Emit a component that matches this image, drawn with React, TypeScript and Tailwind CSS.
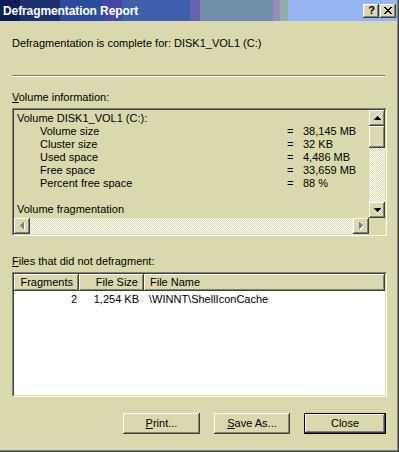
import React from "react";

const btnBevel =
  "shadow-[inset_-1px_-1px_#404040,inset_1px_1px_#ffffff,inset_-2px_-2px_#808080,inset_2px_2px_#dad8ad]";

function Px({ rows, color }: { rows: [number, number, number][]; color: string }) {
  return (
    <>
      {rows.map(([x, y, w], i) => (
        <rect key={i} x={x} y={y} width={w} height={1} fill={color} />
      ))}
    </>
  );
}

function UpArrow() {
  return (
    <svg width="7" height="4" shapeRendering="crispEdges">
      <Px color="#000" rows={[[3, 0, 1], [2, 1, 3], [1, 2, 5], [0, 3, 7]]} />
    </svg>
  );
}
function DownArrow() {
  return (
    <svg width="7" height="4" shapeRendering="crispEdges">
      <Px color="#000" rows={[[0, 0, 7], [1, 1, 5], [2, 2, 3], [3, 3, 1]]} />
    </svg>
  );
}
function SideArrow({ dir }: { dir: "left" | "right" }) {
  const cols = dir === "left" ? [[3, 0, 7], [2, 1, 5], [1, 2, 3], [0, 3, 1]] : [[0, 0, 7], [1, 1, 5], [2, 2, 3], [3, 3, 1]];
  return (
    <svg width="5" height="8" shapeRendering="crispEdges">
      {cols.map(([x, y, h], i) => (
        <rect key={"s" + i} x={x + 1} y={y + 1} width={1} height={h} fill="#ffffff" />
      ))}
      {cols.map(([x, y, h], i) => (
        <rect key={"g" + i} x={x} y={y} width={1} height={h} fill="#808080" />
      ))}
    </svg>
  );
}
function CloseGlyph() {
  const rows: [number, number, number][] = [
    [0, 0, 2], [6, 0, 2],
    [1, 1, 2], [5, 1, 2],
    [2, 2, 4],
    [3, 3, 2],
    [2, 4, 4],
    [1, 5, 2], [5, 5, 2],
    [0, 6, 2], [6, 6, 2],
  ];
  return (
    <svg width="8" height="7" shapeRendering="crispEdges">
      <Px color="#000" rows={rows} />
    </svg>
  );
}

function Sunken({ className, children, inner }: { className: string; children: React.ReactNode; inner: string }) {
  return (
    <div className={`border border-t-[#808080] border-l-[#808080] border-b-white border-r-white ${className}`}>
      <div className={`w-full h-full border border-t-[#404040] border-l-[#404040] border-b-[#dad8ad] border-r-[#dad8ad] ${inner}`}>
        {children}
      </div>
    </div>
  );
}

const checker =
  "bg-[image:repeating-conic-gradient(#ffffff_0%_25%,#dad8ad_0%_50%)] bg-[length:2px_2px]";

const rows: [string, string][] = [
  ["Volume size", "38,145 MB"],
  ["Cluster size", "32 KB"],
  ["Used space", "4,486 MB"],
  ["Free space", "33,659 MB"],
  ["Percent free space", "88 %"],
];

export default function App() {
  return (
    <div className="w-[399px] h-[452px] bg-[#404040] pr-px pb-px font-['Liberation_Sans',Arial,sans-serif] text-[11px] text-black">
      <div className="w-full h-full bg-[#808080] pr-px pb-px">
        <div className="w-full h-full bg-[#dad8ad] flex flex-col">
          {/* Title bar */}
          <div className="h-[21px] w-full flex items-center pl-[3px] pr-[1px] bg-[linear-gradient(90deg,#0f1e55_0px,#0f1e55_20px,#1d3170_20px,#1d3170_60px,#2b4c9c_60px,#2b4c9c_103px,#4646a6_103px,#4646a6_122px,#3f5fae_122px,#3f5fae_190px,#6a62b0_190px,#6a62b0_200px,#6f8fa8_200px,#6f8fa8_273px,#9a8cb6_273px,#9a8cb6_280px,#8eb0a8_280px,#8eb0a8_288px,#94b4f4_288px,#94b4f4_100%)]">
            <span className="text-white font-bold text-[12px] leading-[14px] tracking-[-0.1px]">Defragmentation Report</span>
            <div className="ml-auto flex gap-[1px]">
              <div className={`w-[16px] h-[14px] bg-[#dad8ad] ${btnBevel} flex items-center justify-center`}>
                <span className="font-bold text-[11px] leading-[11px] pl-[1px]">?</span>
              </div>
              <div className={`w-[16px] h-[14px] bg-[#dad8ad] ${btnBevel} flex items-center justify-center`}>
                <CloseGlyph />
              </div>
            </div>
          </div>

          <div className="px-[12px] flex flex-col">
            <div className="mt-[16px] leading-[13px] h-[13px]">Defragmentation is complete for: DISK1_VOL1 (C:)</div>
            <div className="mt-[25px] w-[373px] h-[2px] border-t border-t-[#808080] border-b border-b-white" />
            <div className="mt-[14px] leading-[13px] h-[13px]">
              <span className="underline">V</span>olume information:
            </div>

            {/* Volume box */}
            <Sunken className="mt-[4px] w-[375px] h-[128px]" inner="flex flex-col">
              <div className="flex flex-1 min-h-0">
                <div className="flex-1 pl-[3px] pt-[2px] leading-[13px] overflow-hidden">
                  <div>Volume DISK1_VOL1 (C:):</div>
                  {rows.map(([k, v]) => (
                    <div key={k} className="flex">
                      <span className="pl-[23px] w-[270px]">{k}</span>
                      <span className="w-[16px]">=</span>
                      <span>{v}</span>
                    </div>
                  ))}
                  <div className="h-[13px]" />
                  <div>Volume fragmentation</div>
                </div>
                <div className={`w-[16px] flex flex-col ${checker}`}>
                  <div className={`h-[16px] bg-[#dad8ad] ${btnBevel} flex items-center justify-center`}>
                    <UpArrow />
                  </div>
                  <div className={`h-[22px] bg-[#dad8ad] ${btnBevel}`} />
                  <div className="flex-1" />
                  <div className={`h-[16px] bg-[#dad8ad] ${btnBevel} flex items-center justify-center`}>
                    <DownArrow />
                  </div>
                </div>
              </div>
              <div className="flex h-[16px]">
                <div className={`flex-1 flex ${checker}`}>
                  <div className={`w-[16px] h-[16px] bg-[#dad8ad] ${btnBevel} flex items-center justify-center`}>
                    <SideArrow dir="left" />
                  </div>
                  <div className="flex-1" />
                  <div className={`w-[16px] h-[16px] bg-[#dad8ad] ${btnBevel} flex items-center justify-center`}>
                    <SideArrow dir="right" />
                  </div>
                </div>
                <div className="w-[16px] bg-[#dad8ad]" />
              </div>
            </Sunken>

            <div className="mt-[19px] leading-[13px] h-[13px]">
              <span className="underline">F</span>iles that did not defragment:
            </div>

            {/* List view */}
            <Sunken className="mt-[4px] w-[375px] h-[125px]" inner="bg-white flex flex-col">
              <div className="flex h-[17px] leading-[17px]">
                <div className={`w-[65px] bg-[#dad8ad] ${btnBevel} text-right pr-[6px]`}>Fragments</div>
                <div className={`w-[65px] bg-[#dad8ad] ${btnBevel} text-right pr-[6px]`}>File Size</div>
                <div className={`flex-1 bg-[#dad8ad] ${btnBevel} pl-[6px]`}>File Name</div>
              </div>
              <div className="flex h-[16px] leading-[16px]">
                <div className="w-[65px] text-right pr-[2px]">2</div>
                <div className="w-[65px] text-right pr-[5px]">1,254 KB</div>
                <div className="flex-1 pl-[5px]">\WINNT\ShellIconCache</div>
              </div>
            </Sunken>

            {/* Buttons */}
            <div className="mt-[16px] w-[375px] flex justify-end gap-[14px] pr-[1px]">
              <div className={`w-[77px] h-[21px] bg-[#dad8ad] ${btnBevel} flex items-center justify-center`}>
                <span>
                  <span className="underline">P</span>rint...
                </span>
              </div>
              <div className={`w-[76px] h-[21px] bg-[#dad8ad] ${btnBevel} flex items-center justify-center`}>
                <span>
                  <span className="underline">S</span>ave As...
                </span>
              </div>
              <div className="w-[82px] h-[21px] border border-black">
                <div className={`w-full h-full bg-[#dad8ad] ${btnBevel} flex items-center justify-center`}>Close</div>
              </div>
            </div>
          </div>
        </div>
      </div>
    </div>
  );
}
